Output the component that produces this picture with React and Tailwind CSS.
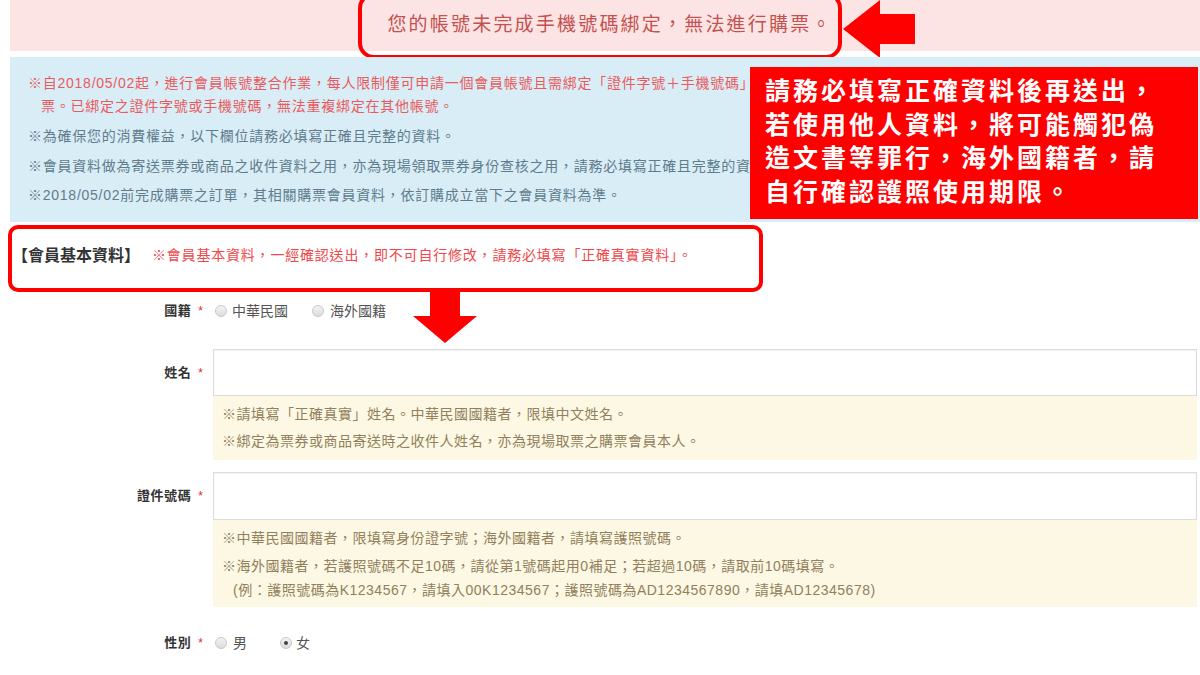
const font = "font-['Liberation_Sans','Noto_Sans_CJK_TC',sans-serif]";

const Radio = ({ checked }) => (
    <span className="flex h-[12px] w-[12px] items-center justify-center rounded-full border border-[#c8c8c8] bg-gradient-to-b from-[#f4f4f4] to-[#dcdcdc]">
        {checked ? <span className="h-[4px] w-[4px] rounded-full bg-[#444]"></span> : null}
    </span>
);

const Label = ({ children }) => (
    <div className="flex w-[213px] shrink-0 items-center justify-end pr-[10px]">
        <span className="text-[13px] font-bold tracking-[0.6px] text-[#333]">{children}</span>
        <span className="ml-[7px] text-[12px] leading-none text-[#e8262b]">*</span>
    </div>
);

const Hint = ({ children, className = "" }) => (
    <div className={`mr-[3px] ml-[213px] bg-[#fcf8e3] pl-[9px] pt-[5px] pb-[5px] text-[14px] tracking-[0.5px] text-[#927f5e] ${className}`}>
        {children}
    </div>
);

export default function App() {
    return (
        <div lang="zh-Hant-TW" className={`relative h-[675px] w-[1200px] overflow-hidden bg-white ${font}`}>
            {/* 頂部警告 */}
            <div className="ml-[10px] flex h-[51px] items-center justify-center bg-[#fde4e4] pl-[10px]">
                <span className="text-[19px] tracking-[2.2px] text-[#c4504f]">您的帳號未完成手機號碼綁定，無法進行購票。</span>
            </div>
            <div className="pointer-events-none absolute left-[358px] top-[-8px] h-[67px] w-[484px] rounded-[16px] border-4 border-[#f00]"></div>
            <svg className="absolute left-[843px] top-0" width="72" height="60" viewBox="0 0 72 60">
                <polygon points="0,29 37,0 37,14 72,14 72,44 37,44 37,58" fill="#f00" />
            </svg>

            {/* 說明區 */}
            <div className="relative ml-[10px] mt-[6px] h-[165px] overflow-hidden bg-[#d9edf7] pl-[18px] pt-[15px] text-[14px] tracking-[0.75px]">
                <p className="whitespace-nowrap leading-[23px] text-[#ea5a5c]">※自2018/05/02起，進行會員帳號整合作業，每人限制僅可申請一個會員帳號且需綁定「證件字號＋手機號碼」，方可進行購</p>
                <p className="whitespace-nowrap pl-[13px] leading-[23px] text-[#ea5a5c]">票。已綁定之證件字號或手機號碼，無法重複綁定在其他帳號。</p>
                <p className="mt-[7px] whitespace-nowrap leading-[23px] text-[#5f7c8c]">※為確保您的消費權益，以下欄位請務必填寫正確且完整的資料。</p>
                <p className="mt-[7px] whitespace-nowrap leading-[23px] text-[#5f7c8c]">※會員資料做為寄送票券或商品之收件資料之用，亦為現場領取票券身份查核之用，請務必填寫正確且完整的資料。</p>
                <p className="mt-[6px] whitespace-nowrap leading-[23px] text-[#5f7c8c]">※2018/05/02前完成購票之訂單，其相關購票會員資料，依訂購成立當下之會員資料為準。</p>

                <div className="absolute left-[740px] top-[10px] h-[152px] w-[448px] bg-[#f00] pl-[15px] pt-[8px] text-[25px] font-bold leading-[33.5px] tracking-[3px] text-white">
                    <p className="whitespace-nowrap">請務必填寫正確資料後再送出，</p>
                    <p className="whitespace-nowrap">若使用他人資料，將可能觸犯偽</p>
                    <p className="whitespace-nowrap">造文書等罪行，海外國籍者，請</p>
                    <p className="whitespace-nowrap">自行確認護照使用期限。</p>
                </div>
            </div>

            {/* 會員基本資料 */}
            <div className="relative">
                <div className="ml-[8px] mt-[3px] flex h-[67px] w-[755px] items-center rounded-[10px] border-4 border-[#f00] pb-[6px]">
                    <span className="text-[16px] font-bold text-[#333]">【會員基本資料】</span>
                    <span className="ml-[12px] text-[14px] tracking-[0.8px] text-[#f0474a]">※會員基本資料，一經確認送出，即不可自行修改，請務必填寫「正確真實資料」。</span>
                </div>
                <svg className="absolute left-[413px] top-[67px]" width="64" height="52" viewBox="0 0 64 52">
                    <polygon points="17,0 47,0 47,24 64,24 32,51 0,24 17,24" fill="#f00" />
                </svg>
            </div>

            {/* 國籍 */}
            <div className="flex h-[38px] items-center">
                <Label>國籍</Label>
                <div className="ml-[2px] flex items-center text-[14px] text-[#555]">
                    <Radio />
                    <span className="ml-[5px]">中華民國</span>
                    <span className="ml-[24px]"><Radio /></span>
                    <span className="ml-[6px]">海外國籍</span>
                </div>
            </div>

            {/* 姓名 */}
            <div className="mt-[19px] flex">
                <Label>姓名</Label>
                <div className="mr-[3px] h-[47px] flex-1 border border-[#dcdcdc] bg-white shadow-[inset_0_1px_2px_rgba(0,0,0,0.06)]"></div>
            </div>
            <Hint className="h-[64px] leading-[27px]">
                <p>※請填寫「正確真實」姓名。中華民國國籍者，限填中文姓名。</p>
                <p>※綁定為票券或商品寄送時之收件人姓名，亦為現場取票之購票會員本人。</p>
            </Hint>

            {/* 證件號碼 */}
            <div className="mt-[12px] flex">
                <Label>證件號碼</Label>
                <div className="mr-[3px] h-[48px] flex-1 border border-[#dcdcdc] bg-white shadow-[inset_0_1px_2px_rgba(0,0,0,0.06)]"></div>
            </div>
            <Hint className="h-[87px]">
                <p className="leading-[27px]">※中華民國國籍者，限填寫身份證字號；海外國籍者，請填寫護照號碼。</p>
                <div className="mt-[2px] leading-[24px]">
                    <p>※海外國籍者，若護照號碼不足10碼，請從第1號碼起用0補足；若超過10碼，請取前10碼填寫。</p>
                    <p className="pl-[11px]">(例：護照號碼為K1234567，請填入00K1234567；護照號碼為AD1234567890，請填AD12345678)</p>
                </div>
            </Hint>

            {/* 性別 */}
            <div className="mt-[17px] flex h-[38px] items-center">
                <Label>性別</Label>
                <div className="ml-[2px] flex items-center text-[14px] text-[#555]">
                    <Radio />
                    <span className="ml-[6px]">男</span>
                    <span className="ml-[33px]"><Radio checked /></span>
                    <span className="ml-[4px]">女</span>
                </div>
            </div>
        </div>
    );
}
